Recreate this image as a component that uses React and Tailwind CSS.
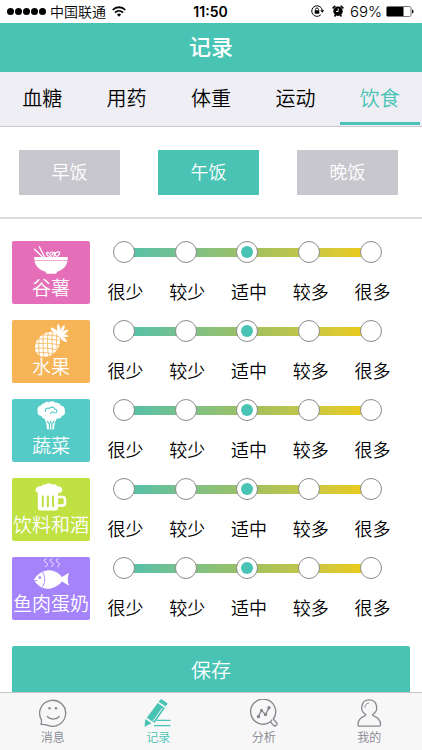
import React, { useState } from 'react';

/* ─── Data ───────────────────────────────────────────────────────────────────── */
const TABS = ['血糖', '用药', '体重', '运动', '饮食'];
const MEALS = ['早饭', '午饭', '晚饭'];
const LEVELS = ['很少', '较少', '适中', '较多', '很多'];

const FOODS = [
  { id: 'grain', name: '谷薯', color: 'bg-[#e46fb8]', Icon: BowlIcon },
  { id: 'fruit', name: '水果', color: 'bg-[#f6b457]', Icon: PineappleIcon },
  { id: 'vegetable', name: '蔬菜', color: 'bg-[#55cbc8]', Icon: BroccoliIcon },
  { id: 'drink', name: '饮料和酒', color: 'bg-[#bfe142]', Icon: BeerIcon },
  { id: 'protein', name: '鱼肉蛋奶', color: 'bg-[#a583fb]', Icon: FishIcon },
];

const NAV = [
  { name: '消息', Icon: MessageIcon },
  { name: '记录', Icon: PencilIcon },
  { name: '分析', Icon: AnalysisIcon },
  { name: '我的', Icon: UserIcon },
];

/* ─── Food icons ─────────────────────────────────────────────────────────────── */
function FoodSvg({ children }) {
  return (
    <svg viewBox="0 0 36 34" className="h-[34px] w-9 shrink-0 overflow-visible" fill="#fff" aria-hidden="true">
      {children}
    </svg>
  );
}

function BowlIcon() {
  return (
    <FoodSvg>
      <path d="M1.5 6.2 9.5 14M6.3 3.8 11.6 14" stroke="#fff" strokeWidth="1.3" strokeLinecap="round" />
      <path
        d="M13.500 9.500c2-.8 3.500 1 4.500 4M13.500 9.500c0 2 1 3.500 3 4M17.500 9.500c2.500-1.500 4 .5 5.500 3.500M26.500 9c-2.500-.5-4.500 1-6 4.500M26.500 9c.5 2-.8 3.500-2.500 4.500M22 9.300c-1.500 0-2.500 1-3 2.500"
        fill="none"
        stroke="#fff"
        strokeWidth="1.200"
        strokeLinecap="round"
      />
      <path d="M1.300 14h33.400v3.200H1.300z" />
      <path d="M1.600 17.700h32.800c-.5 4.800-4.400 9.300-10.400 11.100l-.8 1.900H13.400l-.8-1.900C6.200 27 2.100 22.500 1.600 17.700z" />
    </FoodSvg>
  );
}

function PineappleIcon() {
  return (
    <FoodSvg>
      <ellipse cx="14.500" cy="22.300" rx="14" ry="10.800" transform="rotate(-45 14.500 22.300)" />
      <path
        d="M1 17.500c8-1 17-1 25 1M0 22c9-1 18-1 27 1M1 26.500c8-1 16-.5 24 1.500M3 31c6-.8 12-.5 18 1M6 13.500c7-1 13-.5 20 1M6.500 12c-1 7-1 15 0 22M11 9c-1.500 8-1.300 17 0 26M15.500 8c-1.500 8-1.300 18 0 26M20 7c-1.500 8-1.300 17 0 25M24.300 9c-1.300 6-1 13 0 19"
        fill="none"
        stroke="#f6b457"
        strokeWidth="0.800"
      />
      <path d="M17 5.500c4 .3 6 1.800 7.300 4C23.700 6.500 23.700 4 25 1.700c2 2.300 2.500 4.500 2.300 7 1-3 2.300-4.600 4.300-5.900.4 2.800-.4 5-2 7.300 2-1.800 3.600-2.500 5.900-2.700-.9 2.800-2.700 4.300-5.200 5 2.300-.1 4 .3 5.600 1.700-2 1.300-4.300 1.200-6.600.3 2.600 1.300 4.300 3 4.800 5.500-3.600-.3-5.500-1.900-7-4.500L23.600 12C20.500 10.700 18.300 8.800 17 5.500z" />
    </FoodSvg>
  );
}

function BroccoliIcon() {
  return (
    <FoodSvg>
      <path d="M11 2.500C12.300.7 14.500.3 16 1.200c2-1.400 5-1.200 6.500.6 2-.5 4.600.4 5.200 2.700 2.500.3 4.600 2.500 4 4.800 1.200 2.500-.2 5.200-2.700 5.600-1 2.200-3.500 3-5.400 2.300-1 1.500-3 2-4.600 1.300-1.800 1-4.300.8-5.600-1-2.300.6-4.500-.5-5-2.500-2.700-.2-4.500-2.700-3.600-5-1-2.700.7-5.300 3.200-5.500C8.500 3 9.700 2.300 11 2.500z" />
      <path d="M11.300 17.500 24 17.500c-2 3-3 6.500-2.800 10.800h-7.400c.2-4.300-.6-7.500-2.500-10.800z" />
      <path
        d="M12.500 10.500c-.6-2.700 2-4.300 4-3 1-2 4.700-2 5.200.5 2 .3 2.700 2.300 1.300 3.700M17.500 12.500c.8-1.800 3-2 4-.5M14.300 20.500l2 2.300.2 4.300M21 20.500l-2 2.300-.3 4.300M17.600 20v2"
        fill="none"
        stroke="#55cbc8"
        strokeWidth="1.200"
        strokeLinecap="round"
      />
    </FoodSvg>
  );
}

function BeerIcon() {
  return (
    <FoodSvg>
      <path d="M8.500 6.300c.5-1.600 2.500-2.300 4-1.500 1.300-2 5-2.100 6.500 0 2.200-1 4.600-.2 5.300 1.500 3-.4 5.200 1.500 5 3.700-.1 2.100-1.800 3.200-4.300 3H6.500c-2.600.1-4-1.300-3.900-3.200.1-2.300 2.800-4.200 5.900-3.500z" />
      <path d="M4.800 12.500h20.300v15.600c0 1.500-.9 2.300-2.300 2.300H7.100c-1.400 0-2.300-.8-2.300-2.300z" />
      <path d="M24.500 17h5c1.500 0 2.500 1 2.500 2.500V23c0 1.500-1 2.500-2.500 2.500h-5" fill="none" stroke="#fff" strokeWidth="2.600" />
      <path d="M9.800 16.500v9.800M14.900 16.500v9.800M20 16.500v9.800" stroke="#bfe142" strokeWidth="2" strokeLinecap="round" />
    </FoodSvg>
  );
}

function FishIcon() {
  return (
    <FoodSvg>
      <path
        d="M13-.5c-3 2-1.500 3 0 4s2.500 2.500-.3 4M19-.5c-3 2-1.500 3 0 4s2.500 2.500-.3 4M25-.5c-3 2-1.500 3 0 4s2.500 2.500-.3 4"
        fill="none"
        stroke="#fff"
        strokeWidth="0.900"
        strokeLinecap="round"
      />
      <path d="M.8 20.700C3.500 16 7.500 13 12.500 11.700c6-1.700 12 .8 16.500 6.200l7-4.200c-1.600 4.500-1.600 8.500 0 13l-7-4.300c-3.500 4-7.500 6.400-12 7.300-7 .5-13-3-16.200-9z" />
      <path d="M9.500 13c3 4.800 3 10.500-.2 15M1 21.500l3.500.3" fill="none" stroke="#a583fb" strokeWidth="0.900" />
      <circle cx="6.800" cy="18.600" r="1.300" fill="#a583fb" />
    </FoodSvg>
  );
}

/* ─── Nav icons ──────────────────────────────────────────────────────────────── */
function NavSvg({ children }) {
  return (
    <svg
      viewBox="0 0 28 28"
      className="mb-[3px] h-7 w-7 shrink-0"
      fill="none"
      stroke="currentColor"
      strokeWidth="1.300"
      strokeLinecap="round"
      strokeLinejoin="round"
      aria-hidden="true"
    >
      {children}
    </svg>
  );
}

function MessageIcon() {
  return (
    <NavSvg>
      <path d="M2 25.300c.6-1.700.7-3.300.2-4.900A13 13 0 1 1 9 26.400c-2.300-.8-4.700-1.200-7-1.100z" />
      <path d="M8.300 17.500c3 3.400 9 3.400 12 0" />
      <circle cx="10.500" cy="9.300" r="1.200" fill="currentColor" stroke="none" />
      <circle cx="17" cy="9.300" r="1.200" fill="currentColor" stroke="none" />
    </NavSvg>
  );
}

function PencilIcon() {
  return (
    <NavSvg>
      <path d="M14.500 2.800 16.300.8c.5-.6 1.100-.7 1.700-.3l4.800 3.300c.6.4.7 1 .3 1.700l-1.400 2.100z" fill="currentColor" stroke="none" />
      <path d="M13.700 4l7.200 4.900-10.400 15-7.700-5.100z" fill="currentColor" stroke="none" />
      <path d="M1.200 20l6.300 4.300L.6 27.700z" fill="currentColor" stroke="none" />
      <path d="M18.300 9.300 9.300 22" stroke="#f7f7f7" strokeWidth="1" />
      <path d="M12.500 21.300h14M10 26.700h16.500" strokeLinecap="butt" />
    </NavSvg>
  );
}

function AnalysisIcon() {
  return (
    <NavSvg>
      <path d="M20.500 22.800A12.500 12.500 0 1 1 23.300 20l3.300 3.700c1.300 1.700-1.200 4.200-2.900 2.900zM20.500 22.800l1.200-1.600" />
      <path d="M8.500 17.500l3-6.200 4 4.300 3.500-6.800" />
      <g fill="currentColor" stroke="none">
        <circle cx="8.500" cy="17.500" r="1.700" />
        <circle cx="11.500" cy="11.300" r="1.500" />
        <circle cx="15.500" cy="15.600" r="1.700" />
        <circle cx="19" cy="8.800" r="1.700" />
      </g>
    </NavSvg>
  );
}

function UserIcon() {
  return (
    <NavSvg>
      <path d="M10.800 15.600C4.300 12 5.800.9 14.200.9s9.900 11.100 3.400 14.700c0 .9.500 1.300 1.400 1.600 4.100 1.500 6.500 4.600 6.500 8.500 0 1-.5 1.500-1.500 1.500H4.500c-1 0-1.500-.5-1.500-1.500 0-3.900 2.400-7 6.400-8.500.9-.3 1.400-.7 1.400-1.600z" />
      <path d="M9.800 8.300c.2-2.200 1.500-3.900 3.700-4.300" strokeWidth="1" />
    </NavSvg>
  );
}

/* ─── Status bar ─────────────────────────────────────────────────────────────── */
function StatusBar() {
  return (
    <div className="grid h-[23px] shrink-0 grid-cols-[1fr_auto_1fr] items-center bg-white pr-2 pl-[7px] text-sm text-black">
      <div className="flex items-center">
        <div className="flex gap-px">
          {[1, 2, 3, 4, 5].map((n) => (
            <span key={n} className="h-[7px] w-[7px] rounded-full bg-black" />
          ))}
        </div>
        <span className="ml-1">中国联通</span>
        <svg viewBox="0 0 14 11" className="ml-[6px] h-[11px] w-[14px]" fill="none" stroke="#000" strokeWidth="1.800" aria-hidden="true">
          <path d="M.7 4c3.500-3.700 9.100-3.700 12.600 0M3 6.600c2.300-2.300 5.700-2.300 8 0" />
          <path d="M4.900 8.500c1.200-1.200 3-1.200 4.200 0L7 10.700z" fill="#000" stroke="none" />
        </svg>
      </div>
      <span className="font-semibold">11:50</span>
      <div className="flex items-center justify-end">
        <svg viewBox="0 0 13 12" className="mr-2 h-3 w-[13px]" fill="none" stroke="#000" aria-hidden="true">
          <path d="M9.800 9.800A5.300 5.300 0 1 1 11.300 5.500" />
          <path d="M9.200 5.300h4l-2 2.500z" fill="#000" stroke="none" />
          <path d="M3.700 5.300h4.600v3.400H3.700z" fill="#000" stroke="none" />
          <path d="M4.600 5.500V4.300c0-1.900 2.800-1.900 2.800 0v1.200" strokeWidth="0.900" />
        </svg>
        <svg viewBox="0 0 12 12" className="mr-[6px] h-3 w-3" aria-hidden="true">
          <circle cx="6" cy="6.300" r="4.700" />
          <path d="M.6 3.300 3.300.8M11.400 3.300 8.700.8M2.500 11.500l1.200-1.500M9.500 11.500 8.300 10" stroke="#000" strokeWidth="1.600" />
          <path d="M6.200 3.500v3H4" fill="none" stroke="#fff" strokeWidth="0.900" />
        </svg>
        <span className="text-[15px]">69%</span>
        <svg viewBox="0 0 28 11" className="ml-1 h-[11px] w-7" aria-hidden="true">
          <rect x="0.500" y="0.500" width="24.500" height="10" rx="1.500" fill="#fff" stroke="#777" />
          <rect x="1" y="1" width="16.500" height="9" />
          <path d="M26 3.500c2 .5 2 3.500 0 4z" />
        </svg>
      </div>
    </div>
  );
}

/* ─── One food row: coloured tile + five-step scale ──────────────────────────── */
function FoodRow({ food, value, onChange }) {
  const { Icon } = food;

  return (
    <div role="radiogroup" aria-labelledby={food.id} className="flex items-start gap-[3px]">
      <div className={`flex h-[63px] w-[78px] shrink-0 flex-col items-center rounded-xs pt-[2px] ${food.color}`}>
        <Icon />
        <span id={food.id} className="text-[19px] leading-6 whitespace-nowrap text-white">
          {food.name}
        </span>
      </div>

      <div className="relative flex-1">
        <div className="absolute top-[7px] right-[10%] left-[10%] h-[9px] bg-linear-to-r from-[#4cc0ab] via-[#9dc060] to-[#efcc00]" />
        <div className="relative grid grid-cols-5">
          {LEVELS.map((level, i) => (
            <label key={level} className="flex flex-col items-center text-lg leading-6 text-black">
              <input
                type="radio"
                name={food.id}
                checked={value === i}
                onChange={() => onChange(i)}
                className="mb-[18px] grid h-[22px] w-[22px] appearance-none place-items-center rounded-full border border-[#8c8c8c] bg-white before:h-3 before:w-3 before:rounded-full checked:before:bg-[#48c3b4]"
              />
              <span className="pl-[3px]">{level}</span>
            </label>
          ))}
        </div>
      </div>
    </div>
  );
}

/* ─── App ────────────────────────────────────────────────────────────────────── */
export default function App() {
  const [tab, setTab] = useState('饮食');
  const [meal, setMeal] = useState('午饭');
  const [page, setPage] = useState('记录');
  const [amounts, setAmounts] = useState({ grain: 2, fruit: 2, vegetable: 2, drink: 2, protein: 2 });

  return (
    <div className="flex h-screen flex-col bg-white font-[Inter,'Noto_Sans_CJK_SC',sans-serif] font-[350]">
      <StatusBar />

      <header className="flex h-[49px] shrink-0 items-center justify-center bg-[#48c3b4]">
        <h1 className="text-[22px] font-medium text-white">记录</h1>
      </header>

      <nav className="grid h-[55px] shrink-0 grid-cols-5 border-b border-[#c8c8cc] bg-[#efeef4]">
        {TABS.map((name) => (
          <button
            key={name}
            onClick={() => setTab(name)}
            className={`mx-[2px] mb-px border-b-[3px] pt-1 text-xl ${
              tab === name ? 'border-[#48c3b4] text-[#48c3b4]' : 'border-transparent text-black'
            }`}
          >
            {name}
          </button>
        ))}
      </nav>

      <main className="min-h-0 flex-1 overflow-y-auto [scrollbar-width:none]">
        <div className="flex justify-between border-b-2 border-[#dcdcdc] pt-[23px] pr-6 pb-[22px] pl-[19px]">
          {MEALS.map((name) => (
            <button
              key={name}
              onClick={() => setMeal(name)}
              className={`h-[45px] w-[101px] text-lg text-white ${meal === name ? 'bg-[#48c3b4]' : 'bg-[#c8c7cd]'}`}
            >
              {name}
            </button>
          ))}
        </div>

        <div className="flex flex-col gap-[15px] pt-[22px] pr-5 pl-3">
          {FOODS.map((food) => (
            <FoodRow
              key={food.id}
              food={food}
              value={amounts[food.id]}
              onChange={(v) => setAmounts({ ...amounts, [food.id]: v })}
            />
          ))}
        </div>

        <div className="px-3 pt-[25px] pb-3">
          <button className="h-[50px] w-full rounded-xs bg-[#48c3b4] text-xl text-white">保存</button>
        </div>
      </main>

      <nav className="grid h-[58px] shrink-0 grid-cols-4 border-t border-[#c4c4c4] bg-[#f7f7f7]">
        {NAV.map(({ name, Icon }) => (
          <button
            key={name}
            onClick={() => setPage(name)}
            className={`flex flex-col items-center pt-[6px] text-xs ${page === name ? 'text-[#48c3b4]' : 'text-[#85858f]'}`}
          >
            <Icon />
            <span>{name}</span>
          </button>
        ))}
      </nav>
    </div>
  );
}
